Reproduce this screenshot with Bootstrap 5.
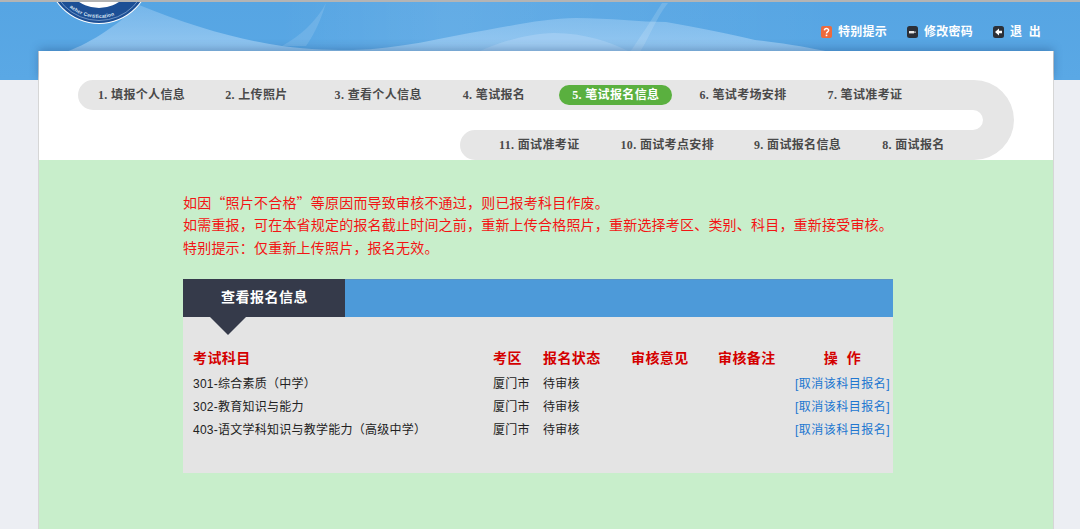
<!DOCTYPE html>
<html lang="zh-CN">
<head>
<meta charset="utf-8">
<title>查看报名信息</title>
<link href="https://cdn.jsdelivr.net/npm/bootstrap@5.3.0/dist/css/bootstrap.min.css" rel="stylesheet">
<style>
html,body{height:529px;overflow:hidden}
body{background:#eceef3;font-family:"Liberation Serif","Noto Sans CJK SC",serif;font-size:12px;color:#333}
.topband{height:80px;border-top:2px solid #b4b4b4;background:linear-gradient(#56a5e3,#5aa8e5);overflow:hidden}
.topband-art{position:absolute;left:0;top:0}
.toplinks{height:37px;padding:0 39px 0 0;gap:20px;position:relative;z-index:1}
.toplink{color:#fff;font-weight:700;font-size:12px;letter-spacing:.25px;text-decoration:none;line-height:14px;gap:6px}
.sheet{width:1016px;margin:-29px 0 0 38px;position:relative;z-index:1;background:#fff;border-left:1px solid #d6d6d6;border-right:1px solid #d6d6d6}
.sheet::before{content:"";position:absolute;left:0;right:0;top:0;height:29px;background:#fff;box-shadow:0 -2px 10px rgba(30,70,120,.4);clip-path:inset(-20px -20px 0 -20px)}
.track{width:936px;height:80px;margin:0 0 0 39px;font-weight:700;color:#4a4a4a;letter-spacing:.35px}
.track-art{position:absolute;left:0;top:0}
.lane{position:relative;height:30px}
.lane-gap{height:20px}
.sheet-top{height:29px}
.stage{white-space:nowrap;line-height:20px;height:20px}
.stage-on{background:#5ab03f;color:#fff;padding:0 12.5px 0 13px;margin-left:34px}
.l1{margin-left:20px}.l2{margin-left:40px}.l3{margin-left:47px}.l4{margin-left:41px}.l6{margin-left:27.5px}.l7{margin-left:41px}
.l11{margin-left:421px}.l10{margin-left:41px}.l9{margin-left:40px}.l8{margin-left:41px}
.greenpane{height:369px;background:#c8eecb;padding:31px 0 0 144px}
.notice{color:#f31414;font-size:14px;line-height:22.4px;letter-spacing:.2px;margin:0 0 20.8px;font-family:"Noto Sans CJK SC",sans-serif}
.infobox{width:710px;background:#e4e4e4;height:194px}
.infohead{height:38px;background:#4d9ad9;border-top:1px solid #5c93c4}
.infotab{width:162px;height:38px;margin-top:-1px;background:#353a4a;color:#fff;font-weight:700;font-size:14px;letter-spacing:.5px;line-height:35px;padding-left:38px;position:relative;font-family:"Noto Sans CJK SC",sans-serif}
.infotab::after{content:"";position:absolute;left:27px;top:38px;border-style:solid;border-width:18px 18px 0 18px;border-color:#353a4a transparent transparent transparent}
.infobody{padding:29px 3px 0 10px}
.signup{--bs-table-bg:transparent;table-layout:fixed;width:697px;margin:0;font-size:12px;color:#222;font-family:"Liberation Sans","Noto Sans CJK SC",sans-serif}
.signup th,.signup td{padding:0;border:0;white-space:nowrap;background:transparent;vertical-align:middle}
.signup th{height:26px;padding-bottom:1px;color:#d40000;font-size:14px;font-weight:700;letter-spacing:.4px}
.signup td{height:23px;letter-spacing:.25px}
.signup th:nth-child(1){width:300px}
.signup th:nth-child(2){width:50px}
.signup th:nth-child(3){width:88px}
.signup th:nth-child(4){width:87px}
.signup th:nth-child(5){width:77px}
.signup a{color:#2277d0;text-decoration:none;letter-spacing:.5px}
</style>
</head>
<body>
<header class="topband position-relative">
  <svg class="topband-art" width="1080" height="78" viewBox="0 0 1080 78">
    <defs>
      <linearGradient id="w1" x1="0" y1="0" x2="0" y2="1"><stop offset="0" stop-color="#9ccbf2" stop-opacity=".45"/><stop offset="1" stop-color="#a4d0f4" stop-opacity=".8"/></linearGradient>
      <linearGradient id="w2" x1="0" y1="0" x2="1" y2="0"><stop offset="0" stop-color="#fff" stop-opacity="0"/><stop offset=".3" stop-color="#fff" stop-opacity=".08"/><stop offset="1" stop-color="#fff" stop-opacity="0"/></linearGradient>
      <path id="ringtext" d="M 68 4 A 46 46 0 0 0 130 4"/>
    </defs>
    <rect x="280" y="0" width="560" height="50" fill="url(#w2)"/>
    <path d="M139 3C190 24 240 38 282 44C310 48 335 48 353 48C400 47 440 36 487 28C520 22 550 16 576 16C610 16 640 20 666 20C700 26 730 32 755 38C790 42 810 46 830 50V52H60C80 46 110 30 139 3Z" fill="url(#w1)"/>
    <path d="M478 50C500 40 525 32 554 31C585 31 610 40 630 50Z" fill="#b5d8f6" opacity=".45"/>
    <path d="M326 1C316 20 300 34 282 44L306 44C316 30 322 14 326 1Z" fill="#fff" opacity=".12"/>
    <path d="M662 1C650 20 640 36 630 50L640 50C650 34 656 16 668 1Z" fill="#fff" opacity=".14"/>
    <circle cx="99" cy="-30" r="52" fill="#fff"/>
    <circle cx="99" cy="-30" r="51" fill="#1d4f95"/>
    <circle cx="99" cy="-30" r="48.5" fill="none" stroke="#8fb0d8" stroke-width=".7"/>
    <circle cx="99" cy="-30" r="36" fill="#fff"/>
    <text font-family="Liberation Sans" font-size="5" font-weight="700" letter-spacing=".2" fill="#dfe9f5"><textPath href="#ringtext" startOffset="2">acher Certification</textPath></text>
  </svg>
  <nav class="toplinks d-flex justify-content-end align-items-end">
    <a class="toplink d-flex align-items-center" href="#"><svg width="11" height="12" viewBox="0 0 11 12"><rect width="11" height="12" rx="2" fill="#ee6a3c"/><path d="M3.4 4.4C3.5 2 7.6 2 7.6 4.3 7.6 5.9 5.5 5.8 5.5 7.6" fill="none" stroke="#fff" stroke-width="1.5"/><rect x="4.7" y="8.6" width="1.6" height="1.6" fill="#fff"/></svg>特别提示</a>
    <a class="toplink d-flex align-items-center" href="#"><svg width="11" height="12" viewBox="0 0 11 12"><rect width="11" height="12" rx="2.5" fill="#2c3038"/><rect x="2" y="5" width="5" height="2.4" fill="#e8e8e8"/><rect x="7" y="5.5" width="2" height="1.3" fill="#bbb"/></svg>修改密码</a>
    <a class="toplink d-flex align-items-center" href="#"><svg width="11" height="12" viewBox="0 0 11 12"><rect width="11" height="12" rx="2.5" fill="#2c3038"/><path d="M2 6 6 2.6V4.8H9V7.2H6V9.4Z" fill="#fff"/></svg>退&nbsp;&nbsp;出</a>
  </nav>
</header>
<main class="sheet">
  <div class="sheet-top"></div>
  <section class="track position-relative">
    <svg class="track-art" width="936" height="80" viewBox="0 0 936 80"><path d="M15 0H896A40 40 0 0 1 896 80H397A15 15 0 0 1 397 50H895A10 10 0 0 0 895 30H15A15 15 0 0 1 15 0Z" fill="#e6e6e6"/></svg>
    <div class="lane d-flex align-items-center">
      <span class="stage l1">1. 填报个人信息</span>
      <span class="stage l2">2. 上传照片</span>
      <span class="stage l3">3. 查看个人信息</span>
      <span class="stage l4">4. 笔试报名</span>
      <span class="stage stage-on rounded-pill">5. 笔试报名信息</span>
      <span class="stage l6">6. 笔试考场安排</span>
      <span class="stage l7">7. 笔试准考证</span>
    </div>
    <div class="lane-gap"></div>
    <div class="lane d-flex align-items-center">
      <span class="stage l11">11. 面试准考证</span>
      <span class="stage l10">10. 面试考点安排</span>
      <span class="stage l9">9. 面试报名信息</span>
      <span class="stage l8">8. 面试报名</span>
    </div>
  </section>
  <section class="greenpane">
    <p class="notice">如因“照片不合格”等原因而导致审核不通过，则已报考科目作废。<br>如需重报，可在本省规定的报名截止时间之前，重新上传合格照片，重新选择考区、类别、科目，重新接受审核。<br>特别提示：仅重新上传照片，报名无效。</p>
    <div class="infobox">
      <div class="infohead"><div class="infotab">查看报名信息</div></div>
      <div class="infobody">
        <table class="table table-borderless signup">
          <thead><tr><th>考试科目</th><th>考区</th><th>报名状态</th><th>审核意见</th><th>审核备注</th><th class="text-center">操&nbsp;&nbsp;作</th></tr></thead>
          <tbody>
            <tr><td>301-综合素质（中学）</td><td>厦门市</td><td>待审核</td><td></td><td></td><td class="text-end"><a href="#">[取消该科目报名]</a></td></tr>
            <tr><td>302-教育知识与能力</td><td>厦门市</td><td>待审核</td><td></td><td></td><td class="text-end"><a href="#">[取消该科目报名]</a></td></tr>
            <tr><td>403-语文学科知识与教学能力（高级中学）</td><td>厦门市</td><td>待审核</td><td></td><td></td><td class="text-end"><a href="#">[取消该科目报名]</a></td></tr>
          </tbody>
        </table>
      </div>
    </div>
  </section>
</main>
</body>
</html>
